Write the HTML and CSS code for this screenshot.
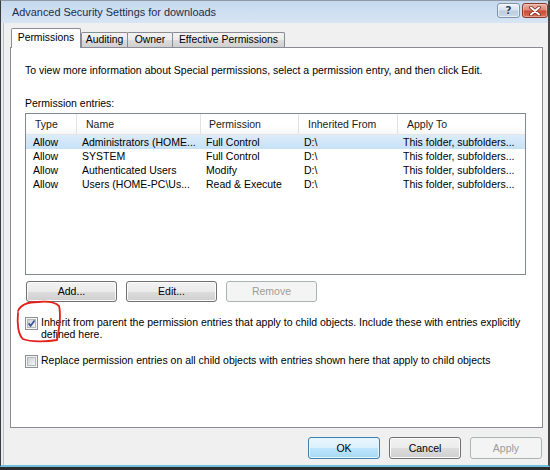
FILE: index.html
```html
<!DOCTYPE html>
<html>
<head>
<meta charset="utf-8">
<title>Advanced Security Settings for downloads</title>
<link rel="stylesheet" href="styles.css">
</head>
<body>
<div class="window">
  <div class="titlebar">
    <span class="title">Advanced Security Settings for downloads</span>
    <div class="tb-buttons">
      <div class="tb-btn help"><span>?</span></div>
      <div class="tb-btn close">
        <svg width="14" height="10" viewBox="0 0 14 10">
          <path d="M3 1.5 L11 8.5 M11 1.5 L3 8.5" stroke="#7a2416" stroke-width="3.6" stroke-linecap="round"/>
          <path d="M3 1.5 L11 8.5 M11 1.5 L3 8.5" stroke="#ffffff" stroke-width="2" stroke-linecap="round"/>
        </svg>
      </div>
    </div>
  </div>
  <div class="client">
    <div class="tabs">
      <div class="tab selected">Permissions</div>
      <div class="tab">Auditing</div>
      <div class="tab">Owner</div>
      <div class="tab">Effective Permissions</div>
    </div>
    <div class="panel">
      <p class="info">To view more information about Special permissions, select a permission entry, and then click Edit.</p>
      <p class="label">Permission entries:</p>
      <div class="list">
        <div class="row header">
          <div class="cell">Type</div>
          <div class="cell">Name</div>
          <div class="cell perm">Permission</div>
          <div class="cell">Inherited From</div>
          <div class="cell">Apply To</div>
        </div>
        <div class="row item selected">
          <div class="cell">Allow</div>
          <div class="cell">Administrators (HOME...</div>
          <div class="cell">Full Control</div>
          <div class="cell">D:\</div>
          <div class="cell">This folder, subfolders...</div>
        </div>
        <div class="row item">
          <div class="cell">Allow</div>
          <div class="cell">SYSTEM</div>
          <div class="cell">Full Control</div>
          <div class="cell">D:\</div>
          <div class="cell">This folder, subfolders...</div>
        </div>
        <div class="row item">
          <div class="cell">Allow</div>
          <div class="cell">Authenticated Users</div>
          <div class="cell">Modify</div>
          <div class="cell">D:\</div>
          <div class="cell">This folder, subfolders...</div>
        </div>
        <div class="row item">
          <div class="cell">Allow</div>
          <div class="cell">Users (HOME-PC\Us...</div>
          <div class="cell">Read &amp; Execute</div>
          <div class="cell">D:\</div>
          <div class="cell">This folder, subfolders...</div>
        </div>
      </div>
      <div class="btn-row">
        <div class="btn small">Add...</div>
        <div class="btn small">Edit...</div>
        <div class="btn small disabled">Remove</div>
      </div>
      <div class="check-row first">
        <svg class="checkbox" width="13" height="13" viewBox="0 0 13 13">
          <defs>
            <linearGradient id="cb1" x1="0" y1="0" x2="1" y2="1">
              <stop offset="0" stop-color="#cbcfd5"/>
              <stop offset="1" stop-color="#f7f7f7"/>
            </linearGradient>
          </defs>
          <rect x="0.5" y="0.5" width="12" height="12" fill="#f6f6f6" stroke="#8e8f8f"/>
          <rect x="2.5" y="2.5" width="8" height="8" fill="url(#cb1)" stroke="#b3b8bd"/>
          <path d="M3.6 6.4 L5.6 8.8 L9.6 3.4" stroke="#3c5393" stroke-width="1.7" fill="none"/>
        </svg>
        <div class="check-text">Inherit from parent the permission entries that apply to child objects. Include these with entries explicitly<br>defined here.</div>
        <svg class="scribble" width="48" height="46" viewBox="0 0 48 46">
          <path d="M3 12 C 6 5, 13 3, 23 3 C 33 2, 40 3, 44 7 C 46 15, 44 31, 42 41 C 31 43, 16 43, 8 40 C 3 36, 2 24, 3 14" stroke="#e4201c" stroke-width="1.8" fill="none" stroke-linecap="round"/>
        </svg>
      </div>
      <div class="check-row second">
        <svg class="checkbox" width="13" height="13" viewBox="0 0 13 13">
          <defs>
            <linearGradient id="cb2" x1="0" y1="0" x2="1" y2="1">
              <stop offset="0" stop-color="#cbcfd5"/>
              <stop offset="1" stop-color="#f7f7f7"/>
            </linearGradient>
          </defs>
          <rect x="0.5" y="0.5" width="12" height="12" fill="#f6f6f6" stroke="#8e8f8f"/>
          <rect x="2.5" y="2.5" width="8" height="8" fill="url(#cb2)" stroke="#b3b8bd"/>
        </svg>
        <div class="check-text">Replace permission entries on all child objects with entries shown here that apply to child objects</div>
      </div>
    </div>
    <div class="footer">
      <div class="btn dialog default">OK</div>
      <div class="btn dialog">Cancel</div>
      <div class="btn dialog disabled">Apply</div>
    </div>
  </div>
</div>
</body>
</html>
```

FILE: styles.css
```css
* {
  box-sizing: border-box;
}

html, body {
  margin: 0;
  padding: 0;
}

body {
  width: 550px;
  height: 470px;
  overflow: hidden;
  background: #2b2b2b;
  font-family: "Liberation Sans", Arial, sans-serif;
  font-size: 10.5px;
  color: #000;
}

.window {
  width: 550px;
  height: 467px;
  display: flex;
  flex-direction: column;
  background: #e9eef4;
  border-top: 1px solid #8f9aa8;
  border-left: 1px solid #3a3a3a;
  border-right: 2px solid #474747;
  border-bottom: 2px solid #6fc0de;
}

.titlebar {
  height: 22px;
  flex: none;
  display: flex;
  align-items: flex-start;
  justify-content: space-between;
  padding: 2px 0 0 11px;
  background: linear-gradient(#c6d9ef, #d7e5f4);
}

.title {
  font-size: 10.9px;
  line-height: 18px;
  color: #1b2d4a;
  white-space: nowrap;
}

.tb-buttons {
  display: flex;
  gap: 2px;
}

.tb-btn {
  height: 15px;
  border-radius: 3px;
  display: flex;
  align-items: center;
  justify-content: center;
}

.help {
  width: 23px;
  border: 1px solid #8293a9;
  background: linear-gradient(#eef3f9 0%, #d6e2ef 48%, #bccddf 52%, #cbd9e8 100%);
  box-shadow: inset 0 0 0 1px rgba(255, 255, 255, 0.55);
}

.help span {
  font-family: "DejaVu Sans", sans-serif;
  font-weight: bold;
  font-size: 11px;
  line-height: 11px;
  color: #31435c;
  text-shadow: 0 0 1px #fff, 0 0 2px #fff;
}

.close {
  width: 26px;
  border: 1px solid #8a3b2f;
  background: linear-gradient(#eab3a4 0%, #dc8a78 45%, #c94a34 55%, #d9735c 100%);
  box-shadow: inset 0 0 0 1px rgba(255, 220, 210, 0.45);
}

.client {
  flex: 1;
  display: flex;
  flex-direction: column;
  margin-left: 2px;
  border-left: 1px solid #b9c0ca;
  background: #f0f0f0;
  padding: 5px 5px 0 6px;
}

.tabs {
  display: flex;
  align-items: flex-end;
  height: 19px;
  padding-left: 1px;
}

.tab {
  height: 15px;
  border: 1px solid #898c95;
  border-bottom: none;
  border-radius: 2px 2px 0 0;
  background: linear-gradient(#f3f3f3 0%, #ebebeb 50%, #dddddd 51%, #cfcfcf 100%);
  text-align: center;
  line-height: 14px;
  font-size: 10.4px;
  white-space: nowrap;
  margin-left: -1px;
}

.tab:nth-child(1) {
  margin-left: 0;
  width: 70px;
}

.tab:nth-child(2) {
  width: 47px;
}

.tab:nth-child(3) {
  width: 46px;
}

.tab:nth-child(4) {
  width: 113px;
}

.tab.selected {
  position: relative;
  z-index: 1;
  height: 20px;
  margin-bottom: -1px;
  line-height: 18px;
  background: linear-gradient(#ffffff, #fbfbfb);
}

.tab.selected + .tab {
  margin-left: 0;
}

.panel {
  height: 381px;
  flex: none;
  border: 1px solid #898c95;
  background: #ffffff;
  padding: 15px 16px 0 14px;
}

.info, .label {
  margin: 0;
  line-height: 14px;
  white-space: nowrap;
}

.label {
  margin-top: 19px;
}

.list {
  margin-top: 3px;
  height: 162px;
  border: 1px solid #828790;
  background: #fff;
}

.row {
  display: grid;
  grid-template-columns: 51px 124px 98px 99px 1fr;
}

.cell {
  white-space: nowrap;
  overflow: hidden;
}

.header {
  height: 21px;
  border-bottom: 1px solid #e3e5e8;
  background: linear-gradient(#ffffff 0%, #ffffff 60%, #f6f7f8 100%);
}

.header .cell {
  line-height: 21px;
  padding-left: 9px;
  color: #1a1a1a;
  border-right: 1px solid #e0e2e5;
}

.header .cell.perm {
  padding-left: 8px;
}

.header .cell:last-child {
  border-right: none;
}

.item {
  height: 14px;
}

.item .cell {
  line-height: 15px;
  padding-left: 5px;
}

.item .cell:first-child {
  padding-left: 7px;
}

.item.selected {
  background: linear-gradient(#dcecfa, #c6e1f6);
}

.btn-row {
  display: flex;
  gap: 9px;
  margin-top: 6px;
  padding-left: 1px;
}

.btn {
  border: 1px solid #707070;
  border-radius: 3px;
  background: linear-gradient(#f2f2f2 0%, #ebebeb 50%, #dddddd 51%, #cfcfcf 100%);
  box-shadow: inset 0 0 0 1px #fbfbfb;
  text-align: center;
  white-space: nowrap;
}

.btn.small {
  width: 91px;
  height: 21px;
  line-height: 19px;
}

.btn.dialog {
  width: 72px;
  height: 22px;
  line-height: 20px;
}

.btn.default {
  border-color: #3c7fb1;
  background: linear-gradient(#eaf6fd 0%, #d9f0fc 50%, #bee6fd 51%, #a7d9f5 100%);
  box-shadow: inset 0 0 0 1px #e4f6ff;
}

.btn.disabled {
  border-color: #adb2b5;
  background: #f4f4f4;
  box-shadow: none;
  color: #9c9c9c;
}

.check-row {
  position: relative;
  display: flex;
  align-items: flex-start;
  gap: 3px;
}

.check-row.first {
  margin-top: 14px;
}

.check-row.second {
  margin-top: 14px;
}

.checkbox {
  flex: none;
  margin-top: 1px;
}

.check-text {
  line-height: 12px;
  white-space: nowrap;
}

.scribble {
  position: absolute;
  left: -10px;
  top: -17px;
  pointer-events: none;
}

.footer {
  display: flex;
  justify-content: flex-end;
  gap: 9px;
  padding-top: 9px;
  padding-right: 1px;
}
```
